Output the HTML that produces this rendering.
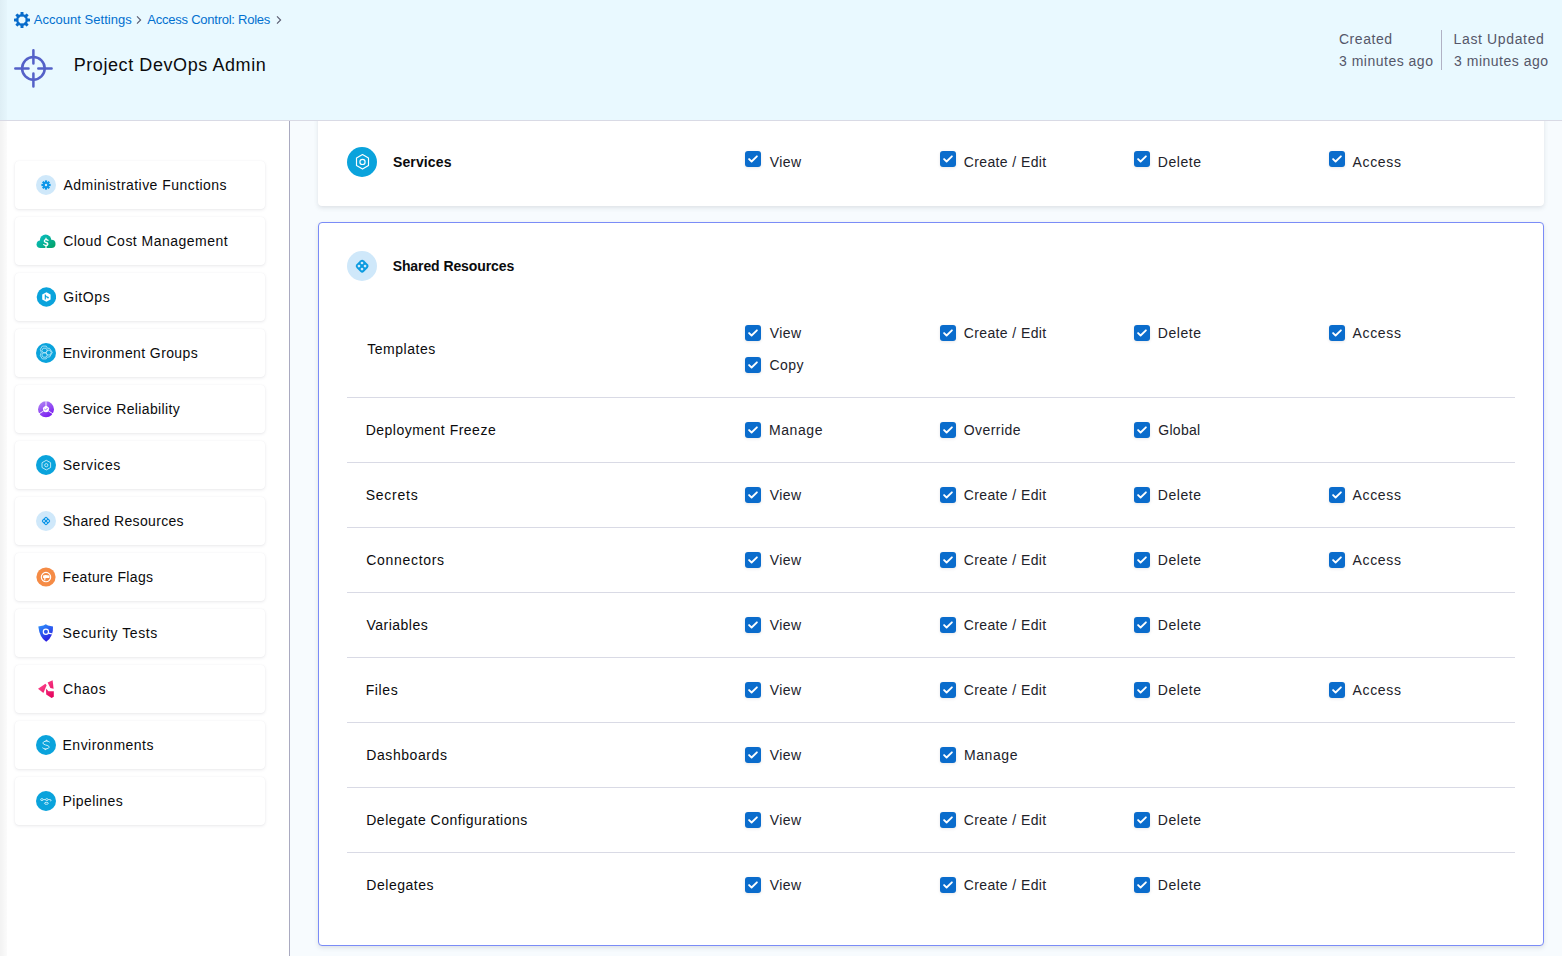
<!DOCTYPE html>
<html><head><meta charset="utf-8"><style>
*{box-sizing:border-box}
html,body{margin:0;padding:0;width:1562px;height:956px;overflow:hidden;background:#F7FBFE;font-family:"Liberation Sans", sans-serif}
.t{position:absolute;white-space:nowrap;line-height:1;}
.side{font-size:14px;color:#0B0B0D;letter-spacing:0.42px}
.title{font-size:14px;font-weight:bold;color:#0B0B0D;letter-spacing:0px}
.title2{letter-spacing:-0.15px}
.lab{font-size:14px;color:#22222A;letter-spacing:0.35px}
.row{font-size:14px;color:#0B0B0D;letter-spacing:0.35px}
#header{position:absolute;left:0;top:0;width:1562px;height:121px;background:#E9F9FF;border-bottom:1px solid #D9DAE5;z-index:5}
#header .shade{position:absolute;left:0;top:0;width:7px;height:120px;background:linear-gradient(to right,rgba(20,40,60,0.05),rgba(20,40,60,0.015))}
.bc{font-size:13px;color:#0270CF;letter-spacing:-0.05px}
.bc2{letter-spacing:-0.22px}
.ttl{font-size:18px;color:#0B0B0D;letter-spacing:0.42px}
.meta{font-size:14px;color:#555769;letter-spacing:0.38px}
#sidebar{position:absolute;left:0;top:121px;width:290px;height:835px;background:#fff;border-right:1px solid #A9AAC0;z-index:2}
#sidebar .shade{position:absolute;left:0;top:0;width:7px;height:835px;background:linear-gradient(to right,rgba(0,0,0,0.05),rgba(0,0,0,0.015))}
.scard{position:absolute;left:15px;width:250px;height:48px;background:#fff;border-radius:4px;box-shadow:0 0 1px rgba(40,41,61,0.06),0 1px 3px rgba(96,97,112,0.14)}
.sicon{position:absolute;left:36px;width:20px;height:20px}
.sicon svg,.bigicon svg{display:block}
.card{position:absolute;background:#fff;border-radius:4px;box-shadow:0 0 1px rgba(40,41,61,0.04),0 2px 4px rgba(96,97,112,0.16)}
.card.sel{border:1px solid #7B8CF7}
.bigicon{position:absolute;width:30px;height:30px}
.cb{position:absolute;width:16px;height:16px;border-radius:3px;background:#0A6CCC;box-shadow:0 0 1px rgba(40,41,61,0.06),0 1px 3px rgba(96,97,112,0.14)}
.cb svg{display:block}
.sep{position:absolute;left:347px;width:1168px;height:1px;background:#D9DAE5}
</style></head><body>
<div id="header"><div class="shade"></div>
<svg style="position:absolute;left:14px;top:12px" width="16" height="16" viewBox="0 0 16 16"><g transform="translate(8 8)"><circle r="4.9" fill="none" stroke="#086CCB" stroke-width="2.1"/><rect x="-1.5" y="-8" width="3" height="4.4" rx="0.5" fill="#086CCB" transform="rotate(0)"/><rect x="-1.5" y="-8" width="3" height="4.4" rx="0.5" fill="#086CCB" transform="rotate(45)"/><rect x="-1.5" y="-8" width="3" height="4.4" rx="0.5" fill="#086CCB" transform="rotate(90)"/><rect x="-1.5" y="-8" width="3" height="4.4" rx="0.5" fill="#086CCB" transform="rotate(135)"/><rect x="-1.5" y="-8" width="3" height="4.4" rx="0.5" fill="#086CCB" transform="rotate(180)"/><rect x="-1.5" y="-8" width="3" height="4.4" rx="0.5" fill="#086CCB" transform="rotate(225)"/><rect x="-1.5" y="-8" width="3" height="4.4" rx="0.5" fill="#086CCB" transform="rotate(270)"/><rect x="-1.5" y="-8" width="3" height="4.4" rx="0.5" fill="#086CCB" transform="rotate(315)"/></g></svg>
<div class="t bc" style="left:33.87px;top:13.10px;letter-spacing:0.019px">Account Settings</div>
<svg style="position:absolute;left:136px;top:15px" width="6" height="10" viewBox="0 0 6 10"><path d="M1 1.3 L4.6 5 L1 8.7" fill="none" stroke="#5A5C70" stroke-width="1.15"/></svg>
<div class="t bc" style="left:147.37px;top:13.10px;letter-spacing:-0.245px">Access Control: Roles</div>
<svg style="position:absolute;left:276px;top:15px" width="6" height="10" viewBox="0 0 6 10"><path d="M1 1.3 L4.6 5 L1 8.7" fill="none" stroke="#5A5C70" stroke-width="1.15"/></svg>
<svg style="position:absolute;left:14px;top:48px" width="40" height="42" viewBox="0 0 40 42"><g fill="none" stroke="#5461C8" stroke-width="2.5" stroke-linecap="round"><circle cx="19.4" cy="20.4" r="11.3"/><path d="M1.3 20.4 H14.5 M24.3 20.4 H37.6 M19.4 2.3 V15.4 M19.4 25.4 V38.5"/></g></svg>
<div class="t ttl" style="left:73.69px;top:56.06px;letter-spacing:0.577px">Project DevOps Admin</div>
<div class="t meta" style="left:1338.95px;top:32.15px;letter-spacing:0.568px">Created</div>
<div class="t meta" style="left:1338.98px;top:53.95px;letter-spacing:0.502px">3 minutes ago</div>
<div style="position:absolute;left:1441px;top:30px;width:1px;height:40px;background:#B0B1C4"></div>
<div class="t meta" style="left:1453.55px;top:32.15px;letter-spacing:0.637px">Last Updated</div>
<div class="t meta" style="left:1454.08px;top:53.95px;letter-spacing:0.502px">3 minutes ago</div>
</div>
<div id="sidebar"><div class="shade"></div></div>
<div id="sidepanel" style="position:absolute;left:0;top:0;z-index:3">
<div class="scard" style="top:161px"></div><div class="sicon" style="top:175px"><svg width="20" height="20" viewBox="0 0 20 20"><circle cx="10" cy="10" r="10" fill="#CFE8FA"/><g transform="translate(10 10)" fill="#0A95E8"><circle r="3"/><rect x="-1.1" y="-4.6" width="2.2" height="2.6" transform="rotate(0)"/><rect x="-1.1" y="-4.6" width="2.2" height="2.6" transform="rotate(45)"/><rect x="-1.1" y="-4.6" width="2.2" height="2.6" transform="rotate(90)"/><rect x="-1.1" y="-4.6" width="2.2" height="2.6" transform="rotate(135)"/><rect x="-1.1" y="-4.6" width="2.2" height="2.6" transform="rotate(180)"/><rect x="-1.1" y="-4.6" width="2.2" height="2.6" transform="rotate(225)"/><rect x="-1.1" y="-4.6" width="2.2" height="2.6" transform="rotate(270)"/><rect x="-1.1" y="-4.6" width="2.2" height="2.6" transform="rotate(315)"/><circle r="1.2" fill="#CFE8FA"/></g></svg></div><div class="t side" style="left:63.58px;top:178.15px;letter-spacing:0.455px">Administrative Functions</div><div class="scard" style="top:217px"></div><div class="sicon" style="top:231px"><svg width="20" height="20" viewBox="0 0 20 20"><defs><linearGradient id="gcl" gradientUnits="userSpaceOnUse" x1="4" y1="3" x2="16" y2="18"><stop offset="0" stop-color="#0ABFC6"/><stop offset="1" stop-color="#03A267"/></linearGradient></defs><g fill="url(#gcl)"><circle cx="9.6" cy="9.2" r="5.7"/><circle cx="4.4" cy="13.3" r="3.8"/><circle cx="15.4" cy="12.9" r="4.1"/><rect x="4.4" y="11" width="11" height="6"/></g><path d="M12 9.3 Q11.1 8.5 9.8 8.6 Q8.2 8.8 8.3 10.1 Q8.5 11.2 10.1 11.5 Q11.9 11.9 11.9 13.2 Q11.7 14.5 10 14.5 Q8.6 14.5 7.8 13.6" fill="none" stroke="#fff" stroke-width="1.3" stroke-linecap="round"/><path d="M10 6.7 V8.7 M10 14.3 V17.2" stroke="#fff" stroke-width="1.2"/></svg></div><div class="t side" style="left:63.15px;top:234.15px;letter-spacing:0.485px">Cloud Cost Management</div><div class="scard" style="top:273px"></div><div class="sicon" style="top:287px"><svg width="20" height="20" viewBox="0 0 20 20"><circle cx="10.4" cy="10" r="9.7" fill="#0AA3DC"/><path d="M10.4 5.3 L14.6 7.6 V12.4 L10.4 14.8 L6.2 12.4 V7.6 Z" fill="#fff"/><path d="M9.3 7.6 V12.4 M9.3 8.2 Q9.6 10 12 10.4" stroke="#0AA3DC" stroke-width="1.1" fill="none"/><circle cx="12" cy="10.6" r="0.9" fill="#0AA3DC"/></svg></div><div class="t side" style="left:63.17px;top:290.15px;letter-spacing:0.596px">GitOps</div><div class="scard" style="top:329px"></div><div class="sicon" style="top:343px"><svg width="20" height="20" viewBox="0 0 20 20"><circle cx="10" cy="10" r="10" fill="#0AA3DC"/><g fill="none" stroke="#BDE8F8" stroke-width="0.85" stroke-linejoin="round"><path d="M6.3 3.1 H10.2 L11.5 5.3 L13.5 5.3 L16.3 9.4 L13.6 14 L11.4 14 L10.2 15.9 H6.3 L4.3 12.6 L5.3 9.4 L4.3 6.3 Z"/><path d="M7.1 5.2 H10 L11.4 7.5 L10 9.8 H7.1 L5.8 7.5 Z"/><path d="M7.1 9.8 H10 L11.4 12 L10 14.2 H7.1 L5.8 12 Z"/><path d="M11.3 7.2 H14 L15.3 9.6 L14 12 H11.3 L10 9.6 Z"/></g></svg></div><div class="t side" style="left:62.65px;top:346.15px;letter-spacing:0.394px">Environment Groups</div><div class="scard" style="top:385px"></div><div class="sicon" style="top:399px"><svg width="20" height="20" viewBox="0 0 20 20"><defs><linearGradient id="gsr" x1="0" y1="0" x2="0.6" y2="1"><stop offset="0" stop-color="#B58BF5"/><stop offset="1" stop-color="#7A1FF0"/></linearGradient></defs><circle cx="10" cy="10.3" r="8" fill="url(#gsr)"/><path d="M10 2 V6.5 M3 14.8 L7.3 12.2 M17 14.8 L12.7 12.2" stroke="#fff" stroke-width="0.9"/><path d="M10 6.3 L13.2 9 L12.6 12.3 Q10 14 7.4 12.3 L6.8 9 Z" fill="#fff"/><path d="M8.4 10.1 L9.6 11 L11.6 9" stroke="#9C5CF3" stroke-width="0.9" fill="none"/></svg></div><div class="t side" style="left:62.66px;top:402.15px;letter-spacing:0.369px">Service Reliability</div><div class="scard" style="top:441px"></div><div class="sicon" style="top:455px"><svg width="20" height="20" viewBox="0 0 20 20"><circle cx="10" cy="10" r="10" fill="#0AA3DC"/><path d="M10.3 5.3 L14.6 7.7 V12.5 L10.3 14.9 L6 12.5 V7.7 Z" fill="none" stroke="#CDEFFA" stroke-width="0.9"/><circle cx="10.3" cy="10.2" r="1.6" fill="none" stroke="#CDEFFA" stroke-width="0.9"/></svg></div><div class="t side" style="left:62.66px;top:458.15px;letter-spacing:0.560px">Services</div><div class="scard" style="top:497px"></div><div class="sicon" style="top:511px"><svg width="20" height="20" viewBox="0 0 20 20"><circle cx="10" cy="10" r="10" fill="#CFE8FA"/><rect x="6.6" y="6.6" width="6.8" height="6.8" rx="1.7" transform="rotate(45 10 10)" fill="#0A95E8"/><g fill="#CFE8FA"><circle cx="10" cy="8" r="0.95"/><circle cx="10" cy="12" r="0.95"/><circle cx="8" cy="10" r="0.95"/><circle cx="12" cy="10" r="0.95"/></g></svg></div><div class="t side" style="left:62.66px;top:514.15px;letter-spacing:0.334px">Shared Resources</div><div class="scard" style="top:553px"></div><div class="sicon" style="top:567px"><svg width="20" height="20" viewBox="0 0 20 20"><circle cx="10" cy="10" r="9.6" fill="#F58B45"/><circle cx="10" cy="10.1" r="4.7" fill="none" stroke="#fff" stroke-width="1.1"/><path d="M7.1 8.4 Q9.5 7.8 11.2 8.3 L13.6 8.5 L13.4 10.9 L10.6 11 L9.4 11.2 L9.2 13.6 L8.3 13.6 L8.2 11.1 L7.1 11.1 Z" fill="#fff"/><path d="M10.2 11.2 L12.6 11 L11.8 12.9 L10.3 12.7 Z" fill="#F58B45"/></svg></div><div class="t side" style="left:62.55px;top:570.15px;letter-spacing:0.342px">Feature Flags</div><div class="scard" style="top:609px"></div><div class="sicon" style="top:623px"><svg width="20" height="20" viewBox="0 0 20 20"><defs><linearGradient id="gst" gradientUnits="userSpaceOnUse" x1="4" y1="2" x2="13" y2="19"><stop offset="0" stop-color="#2D8FFB"/><stop offset="1" stop-color="#2A10DE"/></linearGradient></defs><path d="M9.8 1.3 L12 2.6 L17 3.4 Q17.6 13.6 10.2 18.8 Q3.6 14.4 2.3 3.4 L7.4 2.5 Z" fill="url(#gst)"/><circle cx="9.9" cy="8.8" r="2.6" fill="none" stroke="#fff" stroke-width="1.2"/><path d="M12.3 10.1 L15.9 10.9" stroke="#fff" stroke-width="1.1"/></svg></div><div class="t side" style="left:62.56px;top:626.15px;letter-spacing:0.608px">Security Tests</div><div class="scard" style="top:665px"></div><div class="sicon" style="top:679px"><svg width="20" height="20" viewBox="0 0 20 20"><defs><linearGradient id="gch" gradientUnits="userSpaceOnUse" x1="3" y1="2" x2="17" y2="19"><stop offset="0" stop-color="#FF4E92"/><stop offset="1" stop-color="#E3005A"/></linearGradient></defs><g fill="url(#gch)"><path d="M2 9.7 L9.4 4.8 L10.6 6.2 L7.4 13.9 Z"/><path d="M11.6 3.6 L16.6 1.2 L17.6 9.8 L14.4 8.9 Z"/><path d="M9.9 9.6 L12.5 12.2 L17.8 12.2 L17.8 17.8 L15.6 18.9 L10.2 15.6 Z"/></g></svg></div><div class="t side" style="left:63.05px;top:682.15px;letter-spacing:0.548px">Chaos</div><div class="scard" style="top:721px"></div><div class="sicon" style="top:735px"><svg width="20" height="20" viewBox="0 0 20 20"><circle cx="10" cy="10" r="10" fill="#0AA3DC"/><g fill="none" stroke="#CDEFFA" stroke-width="1"><path d="M13.7 7.2 Q12.4 6 10.2 6.1 Q7.2 6.3 6.9 7.9 Q6.8 9.2 9.3 9.9 L11 10.4 Q13.3 11 13.2 12.2 Q12.9 13.8 9.9 13.9 Q7.6 13.9 6.4 12.7"/></g><path d="M10.5 4.6 L12 6.1 L9.2 6.1 Z M9.5 15.3 L8 13.9 L10.8 13.9 Z" fill="#CDEFFA"/></svg></div><div class="t side" style="left:62.55px;top:738.15px;letter-spacing:0.481px">Environments</div><div class="scard" style="top:777px"></div><div class="sicon" style="top:791px"><svg width="20" height="20" viewBox="0 0 20 20"><circle cx="10" cy="10" r="10" fill="#0AA3DC"/><g fill="none" stroke="#CDEFFA" stroke-width="0.95"><ellipse cx="5.9" cy="8.6" rx="1.3" ry="0.95"/><ellipse cx="10.8" cy="8.6" rx="1.3" ry="0.95"/><path d="M7.2 8.6 H9.5 M12.1 8.6 H14.2 Q15.2 8.6 15 9.6 Q14.8 10.2 14.2 10"/><ellipse cx="10.4" cy="12.3" rx="1.9" ry="1"/></g></svg></div><div class="t side" style="left:62.55px;top:794.15px;letter-spacing:0.428px">Pipelines</div>
</div>
<div id="main" style="position:absolute;left:0;top:0;z-index:1">
<div class="card" style="left:318px;top:90px;width:1226px;height:116px"></div><div class="bigicon" style="left:347px;top:147px"><svg width="30" height="30" viewBox="0 0 30 30"><circle cx="15" cy="15" r="15" fill="#0AA3DC"/><path d="M15.5 7.6 L21.5 11 V18.6 L15.5 22.1 L9.5 18.6 V11 Z" fill="none" stroke="#fff" stroke-width="1.15" stroke-linejoin="round"/><circle cx="15.5" cy="14.9" r="2.6" fill="none" stroke="#fff" stroke-width="1.15"/></svg></div><div class="t title" style="left:392.94px;top:154.85px;letter-spacing:0.125px">Services</div><div class="cb" style="left:745px;top:151px"><svg width="16" height="16" viewBox="0 0 16 16"><path d="M4.1 8.1 L6.6 10.5 L11.9 5.3" fill="none" stroke="#fff" stroke-width="1.85" stroke-linecap="round" stroke-linejoin="round"/></svg></div><div class="t lab" style="left:769.68px;top:155.15px;letter-spacing:0.482px">View</div><div class="cb" style="left:940px;top:151px"><svg width="16" height="16" viewBox="0 0 16 16"><path d="M4.1 8.1 L6.6 10.5 L11.9 5.3" fill="none" stroke="#fff" stroke-width="1.85" stroke-linecap="round" stroke-linejoin="round"/></svg></div><div class="t lab" style="left:963.65px;top:155.15px;letter-spacing:0.399px">Create / Edit</div><div class="cb" style="left:1134px;top:151px"><svg width="16" height="16" viewBox="0 0 16 16"><path d="M4.1 8.1 L6.6 10.5 L11.9 5.3" fill="none" stroke="#fff" stroke-width="1.85" stroke-linecap="round" stroke-linejoin="round"/></svg></div><div class="t lab" style="left:1157.75px;top:155.15px;letter-spacing:0.577px">Delete</div><div class="cb" style="left:1329px;top:151px"><svg width="16" height="16" viewBox="0 0 16 16"><path d="M4.1 8.1 L6.6 10.5 L11.9 5.3" fill="none" stroke="#fff" stroke-width="1.85" stroke-linecap="round" stroke-linejoin="round"/></svg></div><div class="t lab" style="left:1352.58px;top:155.15px;letter-spacing:0.638px">Access</div><div class="card sel" style="left:318px;top:222px;width:1226px;height:724px"></div><div class="bigicon" style="left:347px;top:251px"><svg width="30" height="30" viewBox="0 0 30 30"><circle cx="15" cy="15" r="15" fill="#CFE8FA"/><rect x="9.9" y="9.9" width="10.5" height="10.5" rx="2.6" transform="rotate(45 15.15 15.15)" fill="#0A9BE0"/><g fill="#CFE8FA"><circle cx="15" cy="12" r="1.35"/><circle cx="15" cy="18.1" r="1.35"/><circle cx="11.95" cy="15.05" r="1.35"/><circle cx="18.05" cy="15.05" r="1.35"/></g></svg></div><div class="t title" style="left:392.64px;top:259.45px;letter-spacing:-0.084px">Shared Resources</div><div class="t row" style="left:367.24px;top:342.15px;letter-spacing:0.529px">Templates</div><div class="cb" style="left:745px;top:325px"><svg width="16" height="16" viewBox="0 0 16 16"><path d="M4.1 8.1 L6.6 10.5 L11.9 5.3" fill="none" stroke="#fff" stroke-width="1.85" stroke-linecap="round" stroke-linejoin="round"/></svg></div><div class="t lab" style="left:769.68px;top:326.15px;letter-spacing:0.482px">View</div><div class="cb" style="left:940px;top:325px"><svg width="16" height="16" viewBox="0 0 16 16"><path d="M4.1 8.1 L6.6 10.5 L11.9 5.3" fill="none" stroke="#fff" stroke-width="1.85" stroke-linecap="round" stroke-linejoin="round"/></svg></div><div class="t lab" style="left:963.65px;top:326.15px;letter-spacing:0.399px">Create / Edit</div><div class="cb" style="left:1134px;top:325px"><svg width="16" height="16" viewBox="0 0 16 16"><path d="M4.1 8.1 L6.6 10.5 L11.9 5.3" fill="none" stroke="#fff" stroke-width="1.85" stroke-linecap="round" stroke-linejoin="round"/></svg></div><div class="t lab" style="left:1157.75px;top:326.15px;letter-spacing:0.577px">Delete</div><div class="cb" style="left:1329px;top:325px"><svg width="16" height="16" viewBox="0 0 16 16"><path d="M4.1 8.1 L6.6 10.5 L11.9 5.3" fill="none" stroke="#fff" stroke-width="1.85" stroke-linecap="round" stroke-linejoin="round"/></svg></div><div class="t lab" style="left:1352.58px;top:326.15px;letter-spacing:0.638px">Access</div><div class="cb" style="left:745px;top:357px"><svg width="16" height="16" viewBox="0 0 16 16"><path d="M4.1 8.1 L6.6 10.5 L11.9 5.3" fill="none" stroke="#fff" stroke-width="1.85" stroke-linecap="round" stroke-linejoin="round"/></svg></div><div class="t lab" style="left:769.45px;top:358.15px;letter-spacing:0.447px">Copy</div><div class="sep" style="top:397px"></div><div class="t row" style="left:365.65px;top:423.15px;letter-spacing:0.491px">Deployment Freeze</div><div class="cb" style="left:745px;top:422px"><svg width="16" height="16" viewBox="0 0 16 16"><path d="M4.1 8.1 L6.6 10.5 L11.9 5.3" fill="none" stroke="#fff" stroke-width="1.85" stroke-linecap="round" stroke-linejoin="round"/></svg></div><div class="t lab" style="left:768.95px;top:423.15px;letter-spacing:0.597px">Manage</div><div class="cb" style="left:940px;top:422px"><svg width="16" height="16" viewBox="0 0 16 16"><path d="M4.1 8.1 L6.6 10.5 L11.9 5.3" fill="none" stroke="#fff" stroke-width="1.85" stroke-linecap="round" stroke-linejoin="round"/></svg></div><div class="t lab" style="left:963.81px;top:423.15px;letter-spacing:0.420px">Override</div><div class="cb" style="left:1134px;top:422px"><svg width="16" height="16" viewBox="0 0 16 16"><path d="M4.1 8.1 L6.6 10.5 L11.9 5.3" fill="none" stroke="#fff" stroke-width="1.85" stroke-linecap="round" stroke-linejoin="round"/></svg></div><div class="t lab" style="left:1158.27px;top:423.15px;letter-spacing:0.286px">Global</div><div class="sep" style="top:462px"></div><div class="t row" style="left:365.66px;top:488.15px;letter-spacing:0.765px">Secrets</div><div class="cb" style="left:745px;top:487px"><svg width="16" height="16" viewBox="0 0 16 16"><path d="M4.1 8.1 L6.6 10.5 L11.9 5.3" fill="none" stroke="#fff" stroke-width="1.85" stroke-linecap="round" stroke-linejoin="round"/></svg></div><div class="t lab" style="left:769.68px;top:488.15px;letter-spacing:0.482px">View</div><div class="cb" style="left:940px;top:487px"><svg width="16" height="16" viewBox="0 0 16 16"><path d="M4.1 8.1 L6.6 10.5 L11.9 5.3" fill="none" stroke="#fff" stroke-width="1.85" stroke-linecap="round" stroke-linejoin="round"/></svg></div><div class="t lab" style="left:963.65px;top:488.15px;letter-spacing:0.399px">Create / Edit</div><div class="cb" style="left:1134px;top:487px"><svg width="16" height="16" viewBox="0 0 16 16"><path d="M4.1 8.1 L6.6 10.5 L11.9 5.3" fill="none" stroke="#fff" stroke-width="1.85" stroke-linecap="round" stroke-linejoin="round"/></svg></div><div class="t lab" style="left:1157.75px;top:488.15px;letter-spacing:0.577px">Delete</div><div class="cb" style="left:1329px;top:487px"><svg width="16" height="16" viewBox="0 0 16 16"><path d="M4.1 8.1 L6.6 10.5 L11.9 5.3" fill="none" stroke="#fff" stroke-width="1.85" stroke-linecap="round" stroke-linejoin="round"/></svg></div><div class="t lab" style="left:1352.58px;top:488.15px;letter-spacing:0.638px">Access</div><div class="sep" style="top:527px"></div><div class="t row" style="left:366.15px;top:553.15px;letter-spacing:0.710px">Connectors</div><div class="cb" style="left:745px;top:552px"><svg width="16" height="16" viewBox="0 0 16 16"><path d="M4.1 8.1 L6.6 10.5 L11.9 5.3" fill="none" stroke="#fff" stroke-width="1.85" stroke-linecap="round" stroke-linejoin="round"/></svg></div><div class="t lab" style="left:769.68px;top:553.15px;letter-spacing:0.482px">View</div><div class="cb" style="left:940px;top:552px"><svg width="16" height="16" viewBox="0 0 16 16"><path d="M4.1 8.1 L6.6 10.5 L11.9 5.3" fill="none" stroke="#fff" stroke-width="1.85" stroke-linecap="round" stroke-linejoin="round"/></svg></div><div class="t lab" style="left:963.65px;top:553.15px;letter-spacing:0.399px">Create / Edit</div><div class="cb" style="left:1134px;top:552px"><svg width="16" height="16" viewBox="0 0 16 16"><path d="M4.1 8.1 L6.6 10.5 L11.9 5.3" fill="none" stroke="#fff" stroke-width="1.85" stroke-linecap="round" stroke-linejoin="round"/></svg></div><div class="t lab" style="left:1157.75px;top:553.15px;letter-spacing:0.577px">Delete</div><div class="cb" style="left:1329px;top:552px"><svg width="16" height="16" viewBox="0 0 16 16"><path d="M4.1 8.1 L6.6 10.5 L11.9 5.3" fill="none" stroke="#fff" stroke-width="1.85" stroke-linecap="round" stroke-linejoin="round"/></svg></div><div class="t lab" style="left:1352.58px;top:553.15px;letter-spacing:0.638px">Access</div><div class="sep" style="top:592px"></div><div class="t row" style="left:366.58px;top:618.15px;letter-spacing:0.473px">Variables</div><div class="cb" style="left:745px;top:617px"><svg width="16" height="16" viewBox="0 0 16 16"><path d="M4.1 8.1 L6.6 10.5 L11.9 5.3" fill="none" stroke="#fff" stroke-width="1.85" stroke-linecap="round" stroke-linejoin="round"/></svg></div><div class="t lab" style="left:769.68px;top:618.15px;letter-spacing:0.482px">View</div><div class="cb" style="left:940px;top:617px"><svg width="16" height="16" viewBox="0 0 16 16"><path d="M4.1 8.1 L6.6 10.5 L11.9 5.3" fill="none" stroke="#fff" stroke-width="1.85" stroke-linecap="round" stroke-linejoin="round"/></svg></div><div class="t lab" style="left:963.65px;top:618.15px;letter-spacing:0.399px">Create / Edit</div><div class="cb" style="left:1134px;top:617px"><svg width="16" height="16" viewBox="0 0 16 16"><path d="M4.1 8.1 L6.6 10.5 L11.9 5.3" fill="none" stroke="#fff" stroke-width="1.85" stroke-linecap="round" stroke-linejoin="round"/></svg></div><div class="t lab" style="left:1157.75px;top:618.15px;letter-spacing:0.577px">Delete</div><div class="sep" style="top:657px"></div><div class="t row" style="left:365.65px;top:683.15px;letter-spacing:0.623px">Files</div><div class="cb" style="left:745px;top:682px"><svg width="16" height="16" viewBox="0 0 16 16"><path d="M4.1 8.1 L6.6 10.5 L11.9 5.3" fill="none" stroke="#fff" stroke-width="1.85" stroke-linecap="round" stroke-linejoin="round"/></svg></div><div class="t lab" style="left:769.68px;top:683.15px;letter-spacing:0.482px">View</div><div class="cb" style="left:940px;top:682px"><svg width="16" height="16" viewBox="0 0 16 16"><path d="M4.1 8.1 L6.6 10.5 L11.9 5.3" fill="none" stroke="#fff" stroke-width="1.85" stroke-linecap="round" stroke-linejoin="round"/></svg></div><div class="t lab" style="left:963.65px;top:683.15px;letter-spacing:0.399px">Create / Edit</div><div class="cb" style="left:1134px;top:682px"><svg width="16" height="16" viewBox="0 0 16 16"><path d="M4.1 8.1 L6.6 10.5 L11.9 5.3" fill="none" stroke="#fff" stroke-width="1.85" stroke-linecap="round" stroke-linejoin="round"/></svg></div><div class="t lab" style="left:1157.75px;top:683.15px;letter-spacing:0.577px">Delete</div><div class="cb" style="left:1329px;top:682px"><svg width="16" height="16" viewBox="0 0 16 16"><path d="M4.1 8.1 L6.6 10.5 L11.9 5.3" fill="none" stroke="#fff" stroke-width="1.85" stroke-linecap="round" stroke-linejoin="round"/></svg></div><div class="t lab" style="left:1352.58px;top:683.15px;letter-spacing:0.638px">Access</div><div class="sep" style="top:722px"></div><div class="t row" style="left:366.25px;top:748.15px;letter-spacing:0.577px">Dashboards</div><div class="cb" style="left:745px;top:747px"><svg width="16" height="16" viewBox="0 0 16 16"><path d="M4.1 8.1 L6.6 10.5 L11.9 5.3" fill="none" stroke="#fff" stroke-width="1.85" stroke-linecap="round" stroke-linejoin="round"/></svg></div><div class="t lab" style="left:769.68px;top:748.15px;letter-spacing:0.482px">View</div><div class="cb" style="left:940px;top:747px"><svg width="16" height="16" viewBox="0 0 16 16"><path d="M4.1 8.1 L6.6 10.5 L11.9 5.3" fill="none" stroke="#fff" stroke-width="1.85" stroke-linecap="round" stroke-linejoin="round"/></svg></div><div class="t lab" style="left:963.95px;top:748.15px;letter-spacing:0.597px">Manage</div><div class="sep" style="top:787px"></div><div class="t row" style="left:366.25px;top:813.15px;letter-spacing:0.491px">Delegate Configurations</div><div class="cb" style="left:745px;top:812px"><svg width="16" height="16" viewBox="0 0 16 16"><path d="M4.1 8.1 L6.6 10.5 L11.9 5.3" fill="none" stroke="#fff" stroke-width="1.85" stroke-linecap="round" stroke-linejoin="round"/></svg></div><div class="t lab" style="left:769.68px;top:813.15px;letter-spacing:0.482px">View</div><div class="cb" style="left:940px;top:812px"><svg width="16" height="16" viewBox="0 0 16 16"><path d="M4.1 8.1 L6.6 10.5 L11.9 5.3" fill="none" stroke="#fff" stroke-width="1.85" stroke-linecap="round" stroke-linejoin="round"/></svg></div><div class="t lab" style="left:963.65px;top:813.15px;letter-spacing:0.399px">Create / Edit</div><div class="cb" style="left:1134px;top:812px"><svg width="16" height="16" viewBox="0 0 16 16"><path d="M4.1 8.1 L6.6 10.5 L11.9 5.3" fill="none" stroke="#fff" stroke-width="1.85" stroke-linecap="round" stroke-linejoin="round"/></svg></div><div class="t lab" style="left:1157.75px;top:813.15px;letter-spacing:0.577px">Delete</div><div class="sep" style="top:852px"></div><div class="t row" style="left:366.35px;top:878.15px;letter-spacing:0.514px">Delegates</div><div class="cb" style="left:745px;top:877px"><svg width="16" height="16" viewBox="0 0 16 16"><path d="M4.1 8.1 L6.6 10.5 L11.9 5.3" fill="none" stroke="#fff" stroke-width="1.85" stroke-linecap="round" stroke-linejoin="round"/></svg></div><div class="t lab" style="left:769.68px;top:878.15px;letter-spacing:0.482px">View</div><div class="cb" style="left:940px;top:877px"><svg width="16" height="16" viewBox="0 0 16 16"><path d="M4.1 8.1 L6.6 10.5 L11.9 5.3" fill="none" stroke="#fff" stroke-width="1.85" stroke-linecap="round" stroke-linejoin="round"/></svg></div><div class="t lab" style="left:963.65px;top:878.15px;letter-spacing:0.399px">Create / Edit</div><div class="cb" style="left:1134px;top:877px"><svg width="16" height="16" viewBox="0 0 16 16"><path d="M4.1 8.1 L6.6 10.5 L11.9 5.3" fill="none" stroke="#fff" stroke-width="1.85" stroke-linecap="round" stroke-linejoin="round"/></svg></div><div class="t lab" style="left:1157.75px;top:878.15px;letter-spacing:0.577px">Delete</div>
</div>
</body></html>
